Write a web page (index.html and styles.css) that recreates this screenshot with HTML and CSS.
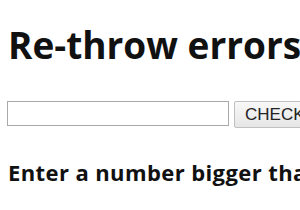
FILE: index.html
```html
<!DOCTYPE html>
<html lang="en">

<head>
    <meta charset="UTF-8">
    <title>Re-throw errors</title>
    <link rel="stylesheet" href="styles.css">
</head>

<body>
    <h1>Re-throw errors</h1>
    <div class="row">
        <input type="text" id="num">
        <button class="button">CHECK</button>
    </div>
    <p class="message">Enter a number bigger than 5</p>
</body>

</html>
```

FILE: styles.css
```css
html {
    overflow: hidden;
}

body {
    font-family: 'Open Sans', sans-serif;
    margin: 0;
    padding: 8px;
    width: 600px;
    background-color: white;
    color: #111;
    white-space: nowrap;
}

h1 {
    font-size: 37px;
    margin: 12px 0 0 0;
    line-height: 50px;
}

.row {
    display: flex;
    margin-top: 31px;
}

input {
    flex-shrink: 0;
    width: 216px;
    height: 21px;
    padding: 1px 2px;
    border: 1px solid #a9a9a9;
    margin: 0 5px 0 -1px;
}

.button {
    flex-shrink: 0;
    font-family: 'Liberation Sans', sans-serif;
    font-size: 17px;
    height: 27px;
    padding: 0 10px;
    border: 1px solid #c0c0c0;
    border-radius: 2px;
    background: linear-gradient(#f8f8f8, #e6e6e6);
    color: #222;
}

.message {
    font-size: 22px;
    font-weight: bold;
    letter-spacing: 0.4px;
    margin: 29px 0 0 0;
}
```
